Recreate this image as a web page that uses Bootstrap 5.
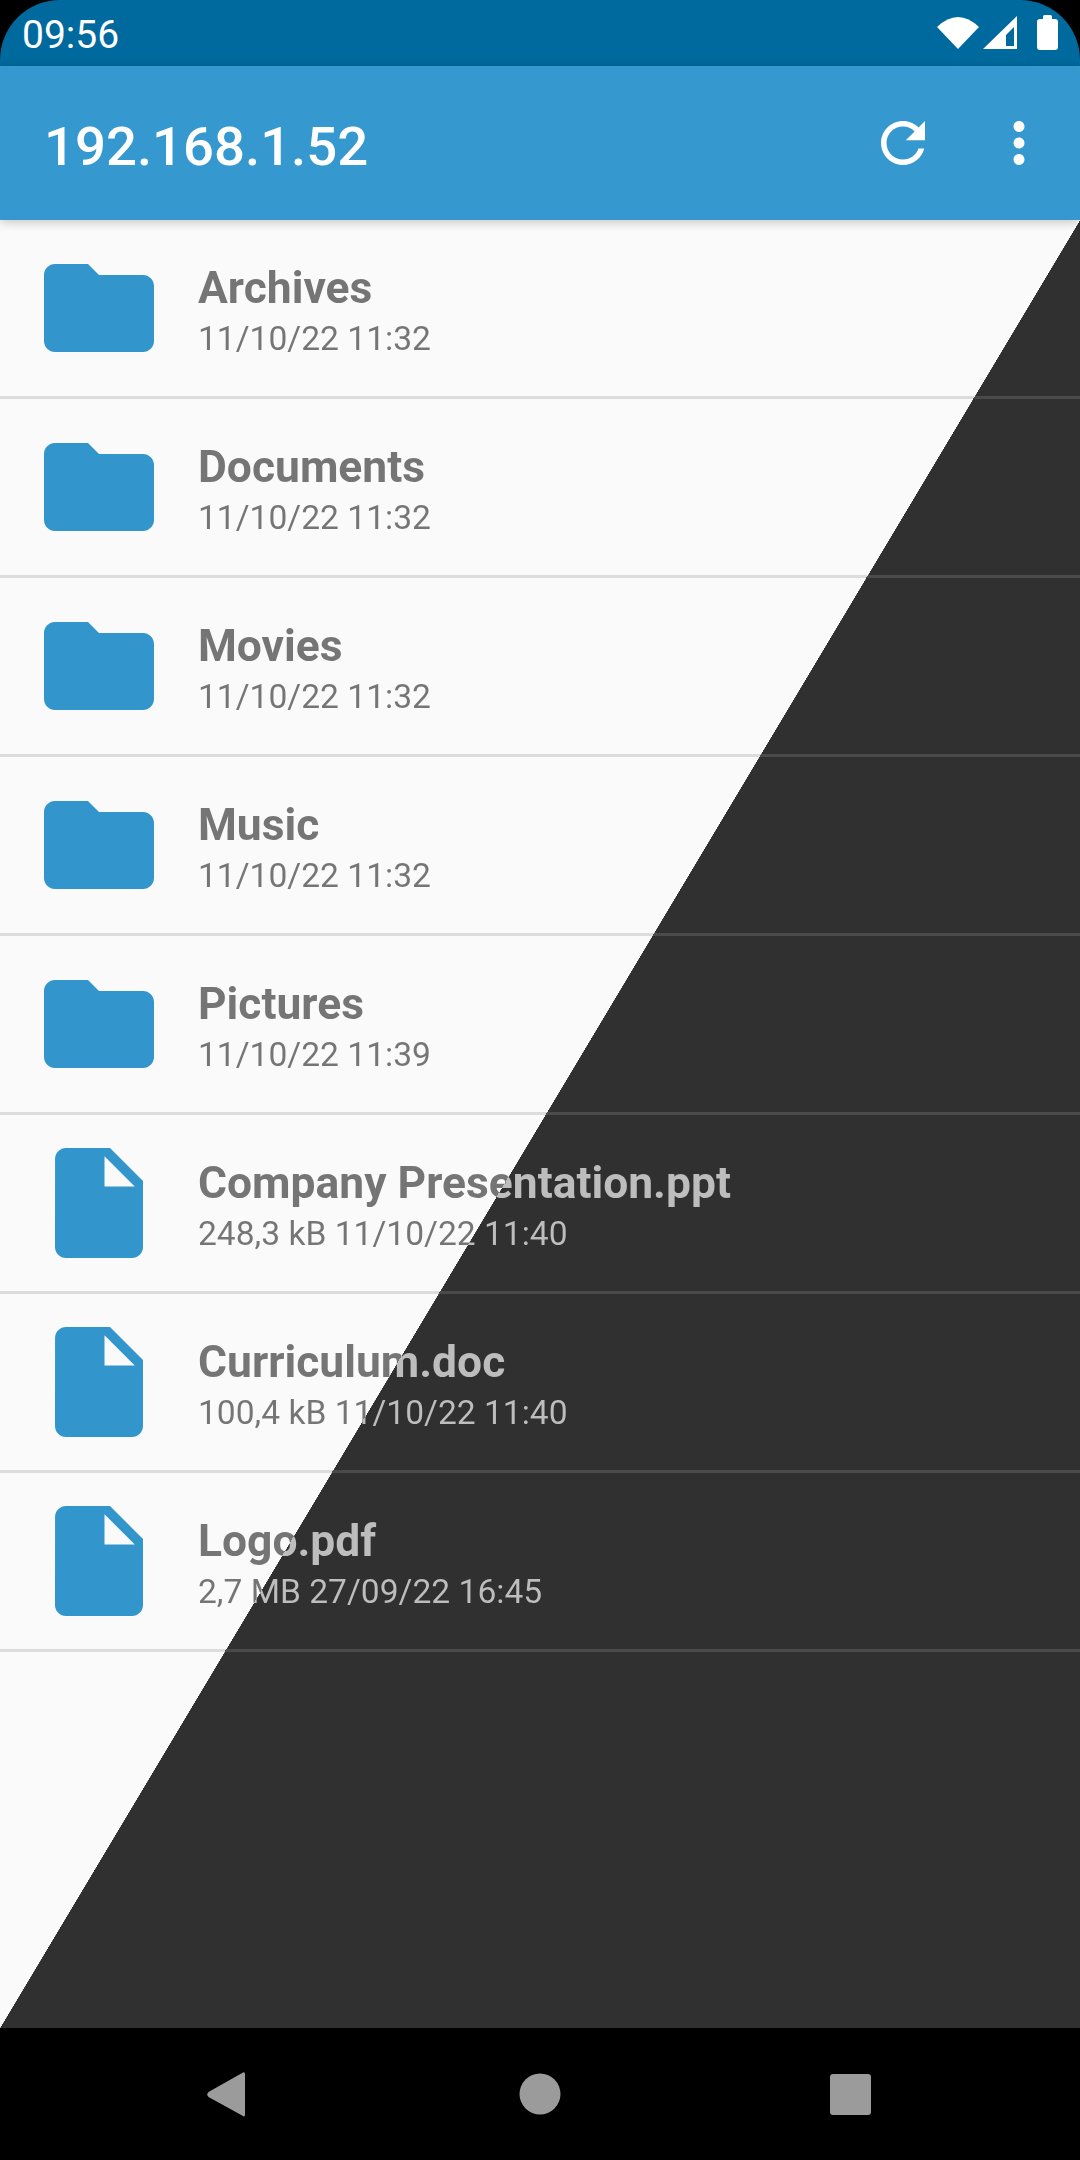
<!DOCTYPE html>
<html lang="en">
<head>
  <meta charset="UTF-8">
  <meta name="viewport" content="width=device-width, initial-scale=1.0">
  <title>192.168.1.52</title>
  <link href="https://cdn.jsdelivr.net/npm/bootstrap@5.3.3/dist/css/bootstrap.min.css" rel="stylesheet">
  <style>
    html, body { height: 2160px; overflow: hidden; background: #000; }
    body { font-family: Roboto, "Liberation Sans", sans-serif; }
    .phone { height: 2160px; }
    .status-strip { height: 66px; background: #006a9e; color: #fff; border-radius: 60px 60px 0 0; padding: 0 22px; font-size: 39px; line-height: 66px; }
    .status-time { margin-top: 3px; }
    .app-head { height: 154px; background: #3598ce; padding: 0 28px 0 44px; position: relative; z-index: 2; box-shadow: 0 2px 10px rgba(0, 0, 0, .22); }
    .app-title { font-size: 54.5px; font-weight: 500; color: #fff; margin: 6px 0 0; line-height: 1; }
    .head-icon { width: 66px; height: 66px; fill: #fff; }
    .head-actions { gap: 50px; }

    /* the diagonal: a 1080x1808 box split corner to corner, same box for bg, text and rules */
    .browse-area { height: 1808px; background: linear-gradient(to bottom right, #fafafa 50%, #303030 50.02%); }
    .split-paint { background-attachment: fixed; background-repeat: no-repeat; background-size: 1080px 1808px; background-position: 0 220px; }
    .split-text { background-image: linear-gradient(to bottom right, #757575 50%, #bdbdbd 50%); -webkit-background-clip: text; background-clip: text; -webkit-text-fill-color: transparent; color: #757575; }

    .entry-row { height: 176px; padding: 22px 0 0 33px; gap: 33px; background: transparent; border: 0; border-radius: 0; }
    .entry-icon { width: 132px; height: 132px; fill: #3296cc; flex: none; }
    .entry-text { margin-top: 21px; }
    .entry-name { font-size: 44.4px; font-weight: 700; line-height: 50px; white-space: nowrap; }
    .entry-meta { font-size: 33.6px; line-height: 51px; white-space: nowrap; }
    .entry-rule { height: 3px; background-image: linear-gradient(to bottom right, #dcdcdc 50%, #4a4a4a 50%); }

    .soft-keys { height: 132px; background: #000; }
    .key-icon { width: 1080px; height: 132px; fill: #9b9b9b; display: block; }
  </style>
</head>
<body>
  <div class="phone d-flex flex-column">
    <div class="status-strip d-flex justify-content-between align-items-center">
      <span class="status-time">09:56</span>
      <svg width="122" height="66" viewBox="936 0 122 66" fill="#fff">
        <path d="M937 27Q958 7 979 27L958 49Z"/>
        <path fill-rule="evenodd" d="M983 49L1017 16V49ZM1006 46H1014V27L1006 35Z"/>
        <path d="M1043 19V16.5Q1043 15 1044.500 15H1050.500Q1052 15 1052 16.500V19H1055Q1058 19 1058 22V47Q1058 50 1055 50H1040Q1037 50 1037 47V22Q1037 19 1040 19Z"/>
      </svg>
    </div>

    <nav class="navbar app-head d-flex align-items-center justify-content-between flex-nowrap">
      <h1 class="app-title">192.168.1.52</h1>
      <div class="head-actions d-flex">
        <svg class="head-icon" viewBox="0 0 24 24"><path d="M17.65 6.35C16.2 4.9 14.21 4 12 4c-4.42 0-7.99 3.58-7.99 8s3.57 8 7.99 8c3.73 0 6.84-2.55 7.73-6h-2.08c-.82 2.33-3.04 4-5.65 4-3.31 0-6-2.69-6-6s2.69-6 6-6c1.66 0 3.14.69 4.22 1.78L13 11h7V4l-2.35 2.35z"/></svg>
        <svg class="head-icon" viewBox="0 0 24 24"><path d="M12 8c1.1 0 2-.9 2-2s-.9-2-2-2-2 .9-2 2 .9 2 2 2zm0 2c-1.1 0-2 .9-2 2s.9 2 2 2 2-.9 2-2-.9-2-2-2zm0 6c-1.1 0-2 .9-2 2s.9 2 2 2 2-.9 2-2-.9-2-2-2z"/></svg>
      </div>
    </nav>

    <div class="browse-area">
      <div class="list-group list-group-flush" id="entryList"></div>
    </div>

    <div class="soft-keys">
      <svg class="key-icon" viewBox="0 2028 1080 132">
        <path d="M243 2072.500Q245 2071.500 245 2074.500V2114.500Q245 2117.500 243 2116L208.500 2097Q206 2094.500 208.500 2092Z"/>
        <circle cx="540" cy="2094" r="20.500"/>
        <rect x="830" y="2074" width="41" height="41" rx="3"/>
      </svg>
    </div>
  </div>

  <script>
    const folderPath = 'M10 4H4c-1.1 0-2 .9-2 2v12c0 1.1.9 2 2 2h16c1.1 0 2-.9 2-2V8c0-1.100-.9-2-2-2h-8l-2-2z';
    const filePath = 'M6 2c-1.100 0-1.990.9-1.990 2L4 20c0 1.100.89 2 1.990 2H18c1.100 0 2-.9 2-2V8l-6-6H6zm7 7V3.500L18.500 9H13z';

    const entries = [
      { name: 'Archives', meta: '11/10/22 11:32', icon: folderPath },
      { name: 'Documents', meta: '11/10/22 11:32', icon: folderPath },
      { name: 'Movies', meta: '11/10/22 11:32', icon: folderPath },
      { name: 'Music', meta: '11/10/22 11:32', icon: folderPath },
      { name: 'Pictures', meta: '11/10/22 11:39', icon: folderPath },
      { name: 'Company Presentation.ppt', meta: '248,3 kB 11/10/22 11:40', icon: filePath },
      { name: 'Curriculum.doc', meta: '100,4 kB 11/10/22 11:40', icon: filePath },
      { name: 'Logo.pdf', meta: '2,7 MB 27/09/22 16:45', icon: filePath }
    ];

    const list = document.getElementById('entryList');
    entries.forEach(entry => {
      list.insertAdjacentHTML('beforeend', `
        <div class="list-group-item entry-row d-flex align-items-start">
          <svg class="entry-icon" viewBox="0 0 24 24"><path d="${entry.icon}"/></svg>
          <div class="entry-text">
            <div class="entry-name split-text split-paint">${entry.name}</div>
            <div class="entry-meta split-text split-paint">${entry.meta}</div>
          </div>
        </div>
        <div class="entry-rule split-paint"></div>
      `);
    });
  </script>
  <script src="https://cdn.jsdelivr.net/npm/bootstrap@5.3.3/dist/js/bootstrap.bundle.min.js"></script>
</body>
</html>
